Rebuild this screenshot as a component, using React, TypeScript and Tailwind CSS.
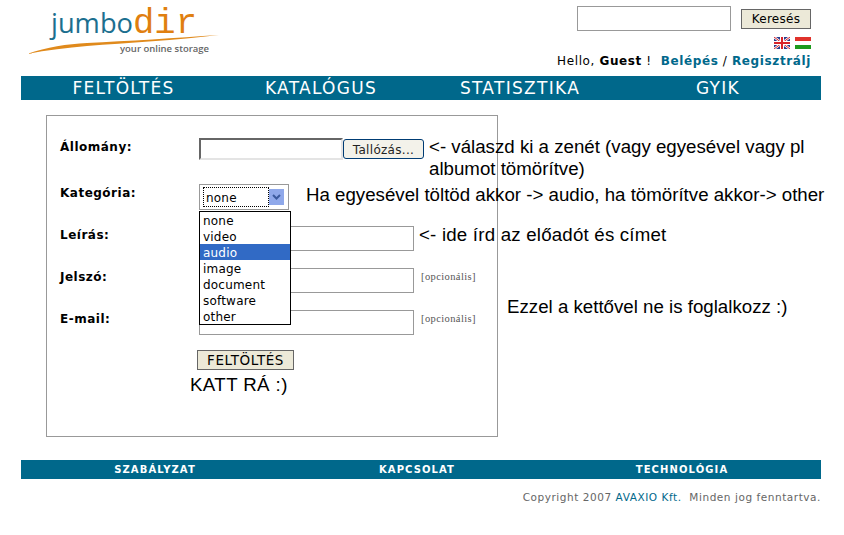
const verdana = "font-['DejaVu_Sans',sans-serif]";
const arial = "font-['Liberation_Sans',Arial,sans-serif]";

const inputClass = "h-[25px] w-[215px] shrink-0 border border-[#999] bg-white";
const noteClass = `${arial} text-[18.7px] leading-[22px] text-black`;

function Logo() {
  return (
    <svg width="200" height="62" viewBox="0 0 200 62" className="block">
      <text x="24" y="28" fontFamily="'Open Sans', sans-serif" fontSize="28" fill="#1c6f8f" textLength="82" lengthAdjust="spacingAndGlyphs">
        jumbo
      </text>
      <text x="106" y="28" fontFamily="'Liberation Mono', monospace" fontSize="35" fill="#e07f10" textLength="64" lengthAdjust="spacingAndGlyphs">
        dir
      </text>
      <path d="M0 49 C 20 42, 40 39, 60 38 C 100 36, 150 33, 192 30 C 150 35, 100 38, 60 41 C 40 43, 20 45, 0 49 Z" fill="#e08a1c" />
      <text x="93" y="47" fontFamily="'Open Sans', sans-serif" fontSize="9.5" fontWeight="600" fill="#666" textLength="89" lengthAdjust="spacingAndGlyphs">
        your online storage
      </text>
    </svg>
  );
}

function UkFlag() {
  return (
    <svg width="16" height="12" viewBox="0 0 16 12" className="block">
      <rect width="16" height="12" fill="#2a3a8c" />
      <path d="M0 0 L16 12 M16 0 L0 12" stroke="#fff" strokeWidth="2.4" />
      <path d="M0 0 L16 12 M16 0 L0 12" stroke="#d8232a" strokeWidth="1" />
      <path d="M8 0 V12 M0 6 H16" stroke="#fff" strokeWidth="4" />
      <path d="M8 0 V12 M0 6 H16" stroke="#d8232a" strokeWidth="2" />
    </svg>
  );
}

function HuFlag() {
  return (
    <div className="w-4">
      <div className="h-1 bg-[#e0322b]" />
      <div className="h-1 bg-white" />
      <div className="h-1 bg-[#1d9a1d]" />
    </div>
  );
}

function Label({ children }: { children: string }) {
  return <div className={`${verdana} w-[139px] shrink-0 pt-px text-[12px] font-bold leading-4 tracking-[0.5px] text-black`}>{children}</div>;
}

function Optional() {
  return <span className="ml-[7px] mt-[3px] font-['Liberation_Serif',serif] text-[10.5px] leading-3 tracking-[0.4px] text-[#555]">[opcionális]</span>;
}

const options = ["none", "video", "audio", "image", "document", "software", "other"];

function CategorySelect() {
  return (
    <div className="relative h-[26px] w-[90px] shrink-0 border border-[#999] bg-white">
      <div className={`${verdana} absolute left-[3px] top-[2px] h-[20px] w-[66px] border border-dotted border-black pl-[2px] text-[12px] leading-[20px] tracking-[0.2px] text-black`}>
        none
      </div>
      <div className="absolute left-[69px] top-[4px] flex h-4 w-[15px] items-center justify-center bg-[#8fa8ea]">
        <svg width="9" height="6" viewBox="0 0 9 6">
          <path d="M1 1 L4.5 4.5 L8 1" fill="none" stroke="#3b5a9e" strokeWidth="2" />
        </svg>
      </div>
      <div className="absolute left-[-1px] top-[26px] z-10 w-[92px] border border-black bg-white">
        {options.map((o) => (
          <div
            key={o}
            className={`${verdana} h-4 pl-[3px] text-[12px] leading-[18px] tracking-[0.2px] ${o === "audio" ? "bg-[#316ac5] text-white" : "text-black"}`}
          >
            {o}
          </div>
        ))}
      </div>
    </div>
  );
}

export default function App() {
  return (
    <div className="h-[535px] w-[844px] overflow-hidden bg-white">
      <header className="flex h-[76px] justify-between pl-[27px] pr-[33px]">
        <div className="pt-[5px]">
          <Logo />
        </div>
        <div className="flex flex-col items-end pt-[6px]">
          <div className="flex items-center">
            <div className="h-[25px] w-[154px] border border-[#999] bg-white" />
            <button className={`${verdana} ml-[10px] h-5 w-[70px] border border-[#666] bg-[#ece9d8] text-[12px] leading-4 tracking-[0.3px] text-black`}>
              Keresés
            </button>
          </div>
          <div className="mt-[6px] flex gap-[5px]">
            <UkFlag />
            <HuFlag />
          </div>
          <div className={`${verdana} mt-[4px] whitespace-pre text-[12px] leading-4 tracking-[0.62px] text-black`}>
            Hello, <b>Guest</b> !{"  "}
            <b className="text-[#00688b]">Belépés</b> / <b className="text-[#00688b]">Regisztrálj</b>
          </div>
        </div>
      </header>

      <nav className={`${verdana} ml-[21px] grid h-6 w-[800px] grid-cols-[205px_190px_208px_188px] items-center bg-[#00688b] text-center text-[17px] tracking-[1.3px] text-white`}>
        <span>FELTÖLTÉS</span>
        <span>KATALÓGUS</span>
        <span>STATISZTIKA</span>
        <span>GYIK</span>
      </nav>

      <main className="relative ml-[46px] mt-[15px] h-[322px] w-[452px] border border-[#999] pl-[13px] pt-[22px]">
        <div className="flex h-[22px]">
          <Label>Állomány:</Label>
          <div className="h-[22px] w-[144px] shrink-0 border-2 border-b-[#e4e4e4] border-l-[#666] border-r-[#e4e4e4] border-t-[#666] bg-white" />
          <button className={`${verdana} mt-[1px] h-5 w-[81px] shrink-0 rounded-[3px] border border-[#003c74] bg-[#f3f2ea] pt-px text-[12px] leading-4 tracking-[0.3px] text-[#222]`}>
            Tallózás...
          </button>
          <p className={`${noteClass} ml-[5px] -mt-[2px] w-[400px] shrink-0`}>&lt;- válaszd ki a zenét (vagy egyesével vagy pl albumot tömörítve)</p>
        </div>

        <div className="mt-[24px] flex h-[26px]">
          <Label>Kategória:</Label>
          <CategorySelect />
          <p className={`${noteClass} ml-[17px] whitespace-nowrap`}>Ha egyesével töltöd akkor -&gt; audio, ha tömörítve akkor-&gt; other</p>
        </div>

        <div className="mt-4 flex h-[25px]">
          <Label>Leírás:</Label>
          <div className={inputClass} />
          <p className={`${noteClass} ml-[5px] -mt-[2px] whitespace-nowrap tracking-[0.2px]`}>&lt;- ide írd az előadót és címet</p>
        </div>

        <div className="mt-[17px] flex h-[25px] items-start">
          <Label>Jelszó:</Label>
          <div className={inputClass} />
          <Optional />
        </div>

        <div className="mt-[17px] flex h-[25px] items-start">
          <Label>E-mail:</Label>
          <div className={inputClass} />
          <Optional />
        </div>

        <button className={`${verdana} ml-[137px] mt-[15px] block h-5 w-[97px] border border-[#666] bg-[#ece9d8] text-[13.5px] leading-4 tracking-[0.55px] text-black`}>
          FELTÖLTÉS
        </button>
        <p className={`${noteClass} ml-[130px] mt-1 tracking-[0.4px]`}>KATT RÁ :)</p>

        <p className={`${noteClass} absolute left-[460px] top-[180px] whitespace-nowrap`}>Ezzel a kettővel ne is foglalkozz :)</p>
      </main>

      <div className={`${verdana} ml-[21px] mt-[23px] grid h-[19px] w-[800px] grid-cols-[268px_256px_274px] items-center bg-[#00688b] text-center text-[10px] font-bold tracking-[1.1px] text-white`}>
        <span>SZABÁLYZAT</span>
        <span>KAPCSOLAT</span>
        <span>TECHNOLÓGIA</span>
      </div>

      <p className={`${verdana} mr-[23px] mt-[10px] whitespace-pre text-right text-[10.5px] leading-4 tracking-[0.55px] text-[#666]`}>
        Copyright 2007 <span className="text-[#00688b]">AVAXIO Kft.</span>{"  "}Minden jog fenntartva.
      </p>
    </div>
  );
}
